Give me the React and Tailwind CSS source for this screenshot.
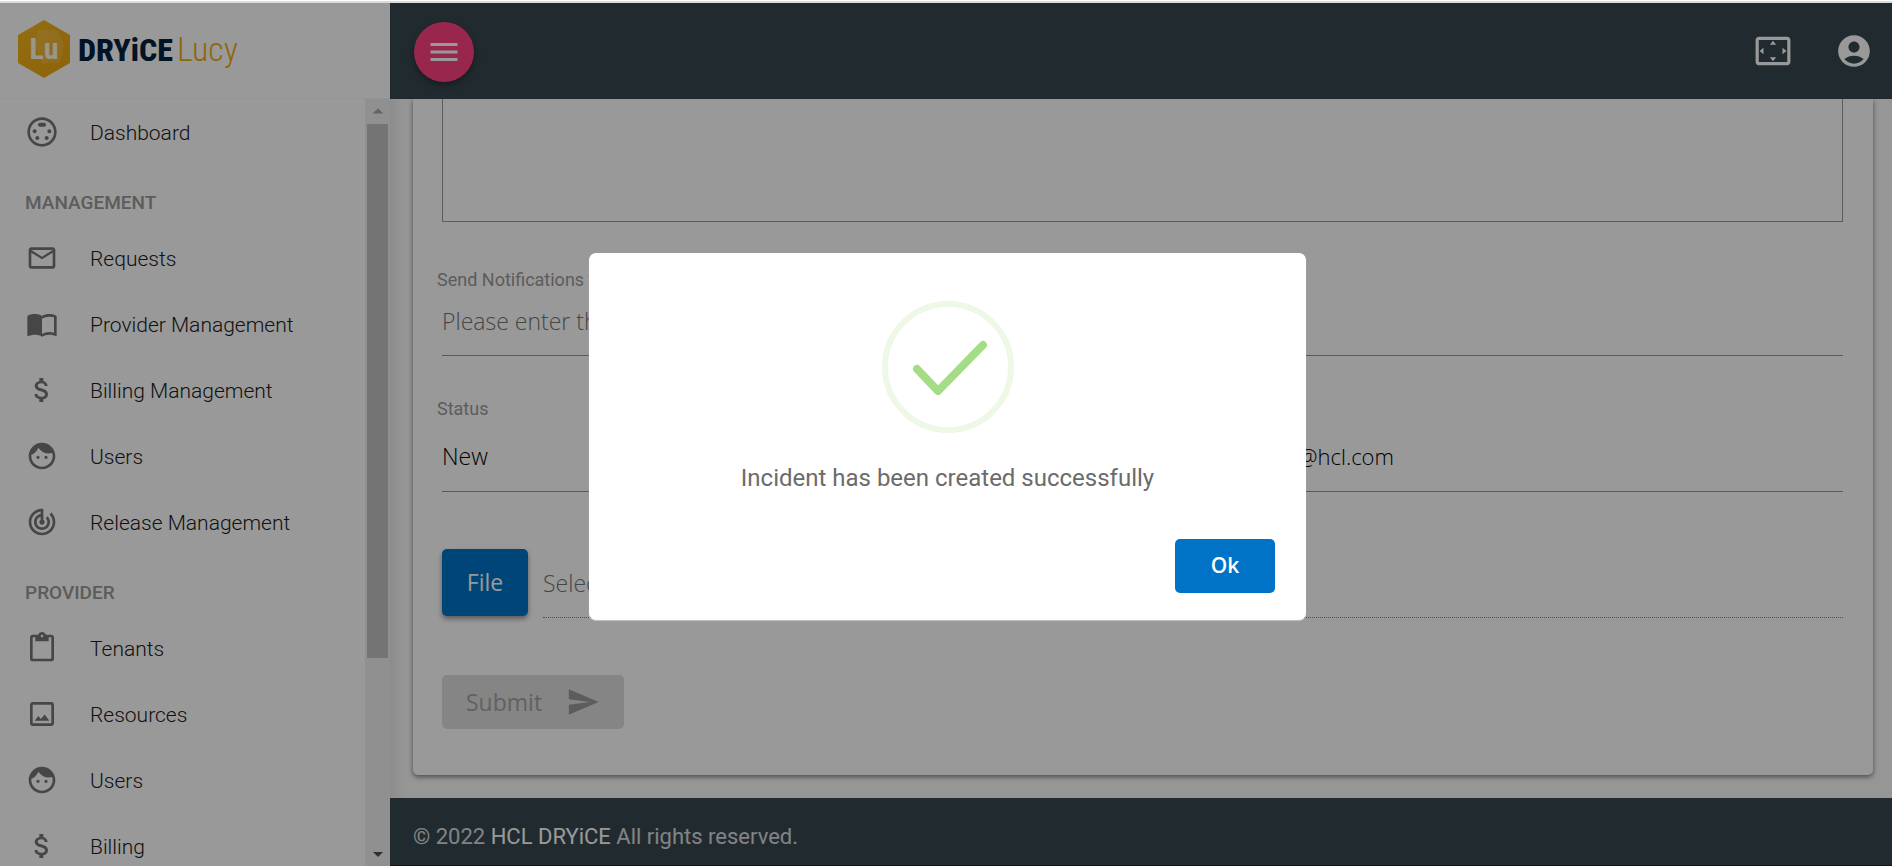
import {
  MdAccountCircle, MdArrowDropDown, MdArrowDropUp, MdAttachMoney, MdContentPaste, MdCropOriginal,
  MdFace, MdImportContacts, MdMailOutline, MdMenu, MdSend, MdSettingsInputSvideo,
  MdSettingsOverscan, MdTrackChanges,
} from "react-icons/md";

const groups = [
  { items: [[MdSettingsInputSvideo, "Dashboard"]] },
  {
    title: "MANAGEMENT",
    items: [
      [MdMailOutline, "Requests"],
      [MdImportContacts, "Provider Management"],
      [MdAttachMoney, "Billing Management"],
      [MdFace, "Users"],
      [MdTrackChanges, "Release Management"],
    ],
  },
  {
    title: "PROVIDER",
    items: [
      [MdContentPaste, "Tenants"],
      [MdCropOriginal, "Resources"],
      [MdFace, "Users"],
      [MdAttachMoney, "Billing"],
    ],
  },
];

function Logo() {
  return (
    <a href="#home" className="flex items-center gap-2 font-['Roboto_Condensed','Liberation_Sans_Narrow',Roboto,sans-serif]">
      <span className="grid shrink-0 place-items-center">
        <svg viewBox="0 0 52 58" className="col-start-1 row-start-1 h-[58px] w-[52px]" aria-hidden="true">
          <defs>
            <linearGradient id="hex" x1="0" y1="0" x2="1" y2="1">
              <stop offset="0" stopColor="#f5b81c" />
              <stop offset="1" stopColor="#eba510" />
            </linearGradient>
          </defs>
          <path d="M26 0 L52 15 V43 L26 58 L0 43 V15 Z" fill="url(#hex)" />
          <path d="M20 10 H38 L46 24 L42 42 L24 44 L17 24 Z" fill="#fff" opacity=".13" />
        </svg>
        <span className="col-start-1 row-start-1 text-[30px] leading-none font-bold text-[#fffbe6]">Lu</span>
      </span>
      <span className="flex items-baseline gap-1 leading-none">
        <span className="text-[32px] font-extrabold text-[#03223f]">DRYiCE</span>
        <span className="text-[34px] font-light text-[#f0ab14]">Lucy</span>
      </span>
    </a>
  );
}

function Scrollbar() {
  return (
    <div className="flex w-[25px] shrink-0 flex-col items-center bg-[#f0f0f0]" aria-hidden="true">
      <MdArrowDropUp className="h-[25px] w-7 shrink-0 text-[#a3a3a3]" />
      <div className="w-[21px] grow-[534] bg-[#c1c1c1]" />
      <div className="grow-[184]" />
      <MdArrowDropDown className="h-6 w-7 shrink-0 text-[#505050]" />
    </div>
  );
}

function Sidebar() {
  return (
    <aside className="relative z-10 flex w-[390px] shrink-0 flex-col bg-white shadow-[0_0_16px_rgba(0,0,0,0.14)]">
      <div className="flex h-24 shrink-0 border-b border-[#f7f7f7] pt-[17px] pl-[18px]">
        <div><Logo /></div>
      </div>
      <div className="flex min-h-0 flex-1">
        <nav className="min-w-0 flex-1 overflow-hidden">
          {groups.map((group, i) => (
            <section key={i}>
              {group.title && (
                <h2 className="h-[60px] pt-[26px] pl-[25px] text-[19px] leading-6 font-medium text-[#999999]">
                  {group.title}
                </h2>
              )}
              <ul>
                {group.items.map(([Icon, label]) => (
                  <li key={label}>
                    <a href={`#${label}`} className="flex h-[66px] items-center gap-8 pl-[26px] text-[21px] leading-8 font-[350] text-[#212121]">
                      <Icon className="size-8 text-[#757575]" />
                      <span className="pt-[2px]">{label}</span>
                    </a>
                  </li>
                ))}
              </ul>
            </section>
          ))}
        </nav>
        <Scrollbar />
      </div>
    </aside>
  );
}

function Header() {
  return (
    <header className="relative z-20 flex h-24 shrink-0 items-center bg-[#37474f] pt-[2px] pr-[19px] pl-6 text-white">
      <button aria-label="Toggle menu" className="grid size-[60px] place-items-center rounded-full bg-[#ff4081] shadow-[0_3px_6px_rgba(0,0,0,0.35)]">
        <MdMenu className="size-9" />
      </button>
      <div className="ml-auto flex gap-[43px] pb-[2px]">
        <button aria-label="Full screen"><MdSettingsOverscan className="size-[38px]" /></button>
        <button aria-label="Account"><MdAccountCircle className="size-[38px]" /></button>
      </div>
    </header>
  );
}

const labelClass = "block text-[18px] leading-6 text-[#9a9a9a]";

function IncidentForm() {
  return (
    <form className="flex-1 rounded-b-[5px] bg-white pr-[30px] pb-[46px] pl-6 shadow-[0_2px_5px_rgba(0,0,0,0.5)]">
      <div className="flex pl-[5px]">
        <textarea aria-label="Description" className="h-[123px] w-full resize-none border border-t-0 border-[#999999] bg-transparent" />
      </div>
      <div className="mt-[46px]">
        <label htmlFor="notify" className={labelClass}>Send Notifications to</label>
        <div className="flex pl-[5px]">
          <input id="notify" placeholder="Please enter the email ids" className="h-16 w-full border-b border-[#949494] bg-transparent pb-[6px] font-[Open_Sans,sans-serif] text-[23px] font-light placeholder:text-[#757575]" />
        </div>
      </div>
      <div className="mt-[41px] grid grid-cols-2">
        <div>
          <label htmlFor="status" className={labelClass}>Status</label>
          <div className="flex pl-[5px]">
            <select id="status" className="h-[71px] w-full appearance-none border-b border-[#949494] bg-transparent font-[Open_Sans,sans-serif] text-[23px] font-[350] text-black">
              <option>New</option>
            </select>
          </div>
        </div>
        <div className="flex items-end">
          <input aria-label="Email" defaultValue="@hcl.com" className="h-[71px] w-full border-b border-[#949494] bg-transparent pl-[158px] font-[Open_Sans,sans-serif] text-[22px] font-[350] text-black" />
        </div>
      </div>
      <div className="mt-[57px] flex gap-[15px] pl-[5px]">
        <button type="button" className="h-[67px] w-[86px] shrink-0 rounded-[5px] bg-[#0073c6] font-[Open_Sans,sans-serif] text-[23px] font-medium text-white shadow-[0_3px_5px_rgba(0,0,0,0.4)]">File</button>
        <input aria-label="File name" placeholder="Select file" className="h-[69px] min-w-0 flex-1 border-b border-dotted border-[#858585] bg-transparent font-[Open_Sans,sans-serif] text-[23px] font-light placeholder:text-[#757575]" />
      </div>
      <div className="mt-[57px] pl-[5px]">
        <button type="submit" disabled className="flex h-[54px] items-center gap-6 rounded-[5px] bg-[#dedede] px-6 font-[Open_Sans,sans-serif] text-[23px] text-[#a2a2a2]">
          Submit
          <MdSend className="size-[34px] text-[#999999]" />
        </button>
      </div>
    </form>
  );
}

function SuccessDialog() {
  return (
    <div className="absolute inset-0 z-30 flex items-center justify-center bg-black/40 pt-1 pl-[3px]">
      <div role="alertdialog" aria-describedby="dialog-text" className="flex w-[717px] flex-col items-center rounded-[7px] bg-white pt-12 pb-[27px] shadow-[0_1px_1px_rgba(255,255,255,0.4)]">
        <svg viewBox="0 0 132 132" className="size-[132px]" fill="none" aria-hidden="true">
          <circle cx="66" cy="66" r="63" stroke="#edf8e7" strokeWidth="6" />
          <path d="M35 68 L56 90 L101 44" stroke="#a5dc86" strokeWidth="8" strokeLinecap="round" strokeLinejoin="round" />
        </svg>
        <p id="dialog-text" className="mt-[29px] text-[24px] leading-8 text-[#6b6b6b]">Incident has been created successfully</p>
        <button className="mt-[45px] mr-[31px] h-[54px] w-[100px] self-end rounded-[5px] bg-[#0073c6] font-[Open_Sans,sans-serif] text-[21px] font-semibold text-white">Ok</button>
      </div>
    </div>
  );
}

export default function App() {
  return (
    <div className="flex h-screen flex-col border-t border-white bg-[#fafafa] font-[Roboto,sans-serif]">
      <div className="h-[2px] shrink-0 bg-[#dadcdc]" />
      <div className="relative flex min-h-0 flex-1 overflow-hidden">
        <Sidebar />
        <div className="flex min-w-0 flex-1 flex-col">
          <Header />
          <main className="flex min-h-0 flex-1 flex-col pr-[19px] pb-[23px] pl-[23px]">
            <IncidentForm />
          </main>
          <footer className="relative z-20 flex h-[68px] shrink-0 items-center border-b border-[#241c2c] bg-[#37474f] pt-[10px] pl-[23px] text-[22px] text-white/80">
            <p>© 2022 <strong className="font-normal text-white">HCL DRYiCE</strong> All rights reserved.</p>
          </footer>
        </div>
        <SuccessDialog />
      </div>
    </div>
  );
}
